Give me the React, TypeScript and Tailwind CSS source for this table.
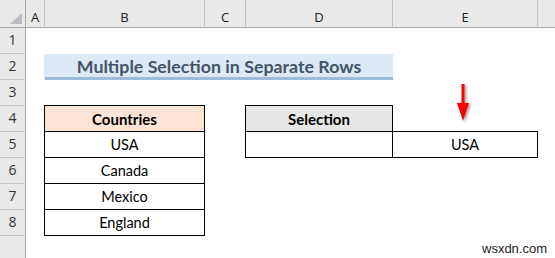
import React from 'react';

const cellFont = "font-['Lato','Liberation_Sans',sans-serif]";
const headFont = "font-['Open_Sans','Liberation_Sans',sans-serif]";

const letters = ['A', 'B', 'C', 'D', 'E', ''];
const countries = ['USA', 'Canada', 'Mexico', 'England'];

const RowHead: React.FC<{ n?: number }> = ({ n }) => (
  <div
    className={`bg-[#e9e9e9] border-r border-b border-r-[#a9a9a9] border-b-[#c8c8c8] flex items-end justify-center pb-[3px] text-[14px] text-[#333] ${headFont}`}
  >
    {n}
  </div>
);

const Empty = () => <div />;

export default function App() {
  return (
    <div className="relative w-[555px] h-[258px] overflow-hidden bg-white">
      <div className="grid h-full grid-cols-[26px_19px_160px_41px_147px_145px_1fr] grid-rows-[28px_repeat(8,26px)_1fr]">
        {/* column header */}
        <div className="bg-[#e9e9e9] border-r border-b border-r-[#a9a9a9] border-b-[#a9a9a9] flex items-end justify-end pr-[2px] pb-[2px]">
          <svg width="14" height="12" viewBox="0 0 14 12">
            <polygon points="13,0 13,11 1,11" fill="#bcbcbc" />
          </svg>
        </div>
        {letters.map((l, i) => (
          <div
            key={i}
            className={`bg-[#e9e9e9] border-b border-b-[#a9a9a9] ${i < 5 ? 'border-r border-r-[#c3c3c3]' : ''} flex items-center justify-center pt-[8px] text-[13px] text-[#222] ${headFont}`}
          >
            {l}
          </div>
        ))}

        {/* row 1 */}
        <RowHead n={1} />
        <Empty /><Empty /><Empty /><Empty /><Empty /><Empty />

        {/* row 2: title */}
        <RowHead n={2} />
        <Empty />
        <div className="col-span-3 bg-[#dde9f5] border-b-[3px] border-b-[#9fbbdc] shadow-[-1px_0_0_#dde9f5] flex items-center justify-center pt-[1px]">
          <span className={`text-[17.8px] font-bold text-[#44546a] ${cellFont}`}>
            Multiple Selection in Separate Rows
          </span>
        </div>
        <Empty /><Empty />

        {/* row 3 */}
        <RowHead n={3} />
        <Empty /><Empty /><Empty /><Empty /><Empty /><Empty />

        {/* row 4 */}
        <RowHead n={4} />
        <Empty />
        <div className={`bg-[#fce4d6] border-r border-b border-black shadow-[-1px_0_0_#000,0_-1px_0_#000,-1px_-1px_0_#000] flex items-center justify-center pt-[1px] text-[15px] font-bold text-black ${cellFont}`}>
          Countries
        </div>
        <Empty />
        <div className={`bg-[#e7e6e6] border-r border-b border-black shadow-[-1px_0_0_#000,0_-1px_0_#000,-1px_-1px_0_#000] flex items-center justify-center pt-[1px] text-[15px] font-bold text-black ${cellFont}`}>
          Selection
        </div>
        <Empty /><Empty />

        {/* rows 5-8 */}
        {countries.map((c, i) => (
          <React.Fragment key={c}>
            <RowHead n={5 + i} />
            <Empty />
            <div className={`border-r border-b border-black shadow-[-1px_0_0_#000] flex items-center justify-center pt-[1px] text-[14.5px] text-black ${cellFont}`}>
              {c}
            </div>
            <Empty />
            {i === 0 ? (
              <>
                <div className="border-r border-b border-black shadow-[-1px_0_0_#000]" />
                <div className={`border-r border-b border-black shadow-[0_-1px_0_#000] flex items-center justify-center pt-[1px] text-[14.5px] text-black ${cellFont}`}>
                  USA
                </div>
              </>
            ) : (
              <>
                <Empty /><Empty />
              </>
            )}
            <Empty />
          </React.Fragment>
        ))}

        {/* row 9 (cut off) */}
        <div className="bg-[#e9e9e9] border-r border-r-[#a9a9a9]" />
        <Empty /><Empty /><Empty /><Empty /><Empty /><Empty />
      </div>

      {/* red arrow pointing at E5 */}
      <svg
        className="absolute left-[452px] top-[80px] drop-shadow-[2px_1px_1px_rgba(0,0,0,0.35)]"
        width="22"
        height="46"
        viewBox="0 0 22 46"
      >
        <rect x="9.5" y="4" width="3" height="21" fill="#ff0000" />
        <polygon points="5,23 17,23 11,41" fill="#ff0000" />
      </svg>

      <span className="absolute left-[482px] top-[239px] text-[13px] text-[#222] font-['Liberation_Sans',Arial,sans-serif]">
        wsxdn.com
      </span>
    </div>
  );
}
